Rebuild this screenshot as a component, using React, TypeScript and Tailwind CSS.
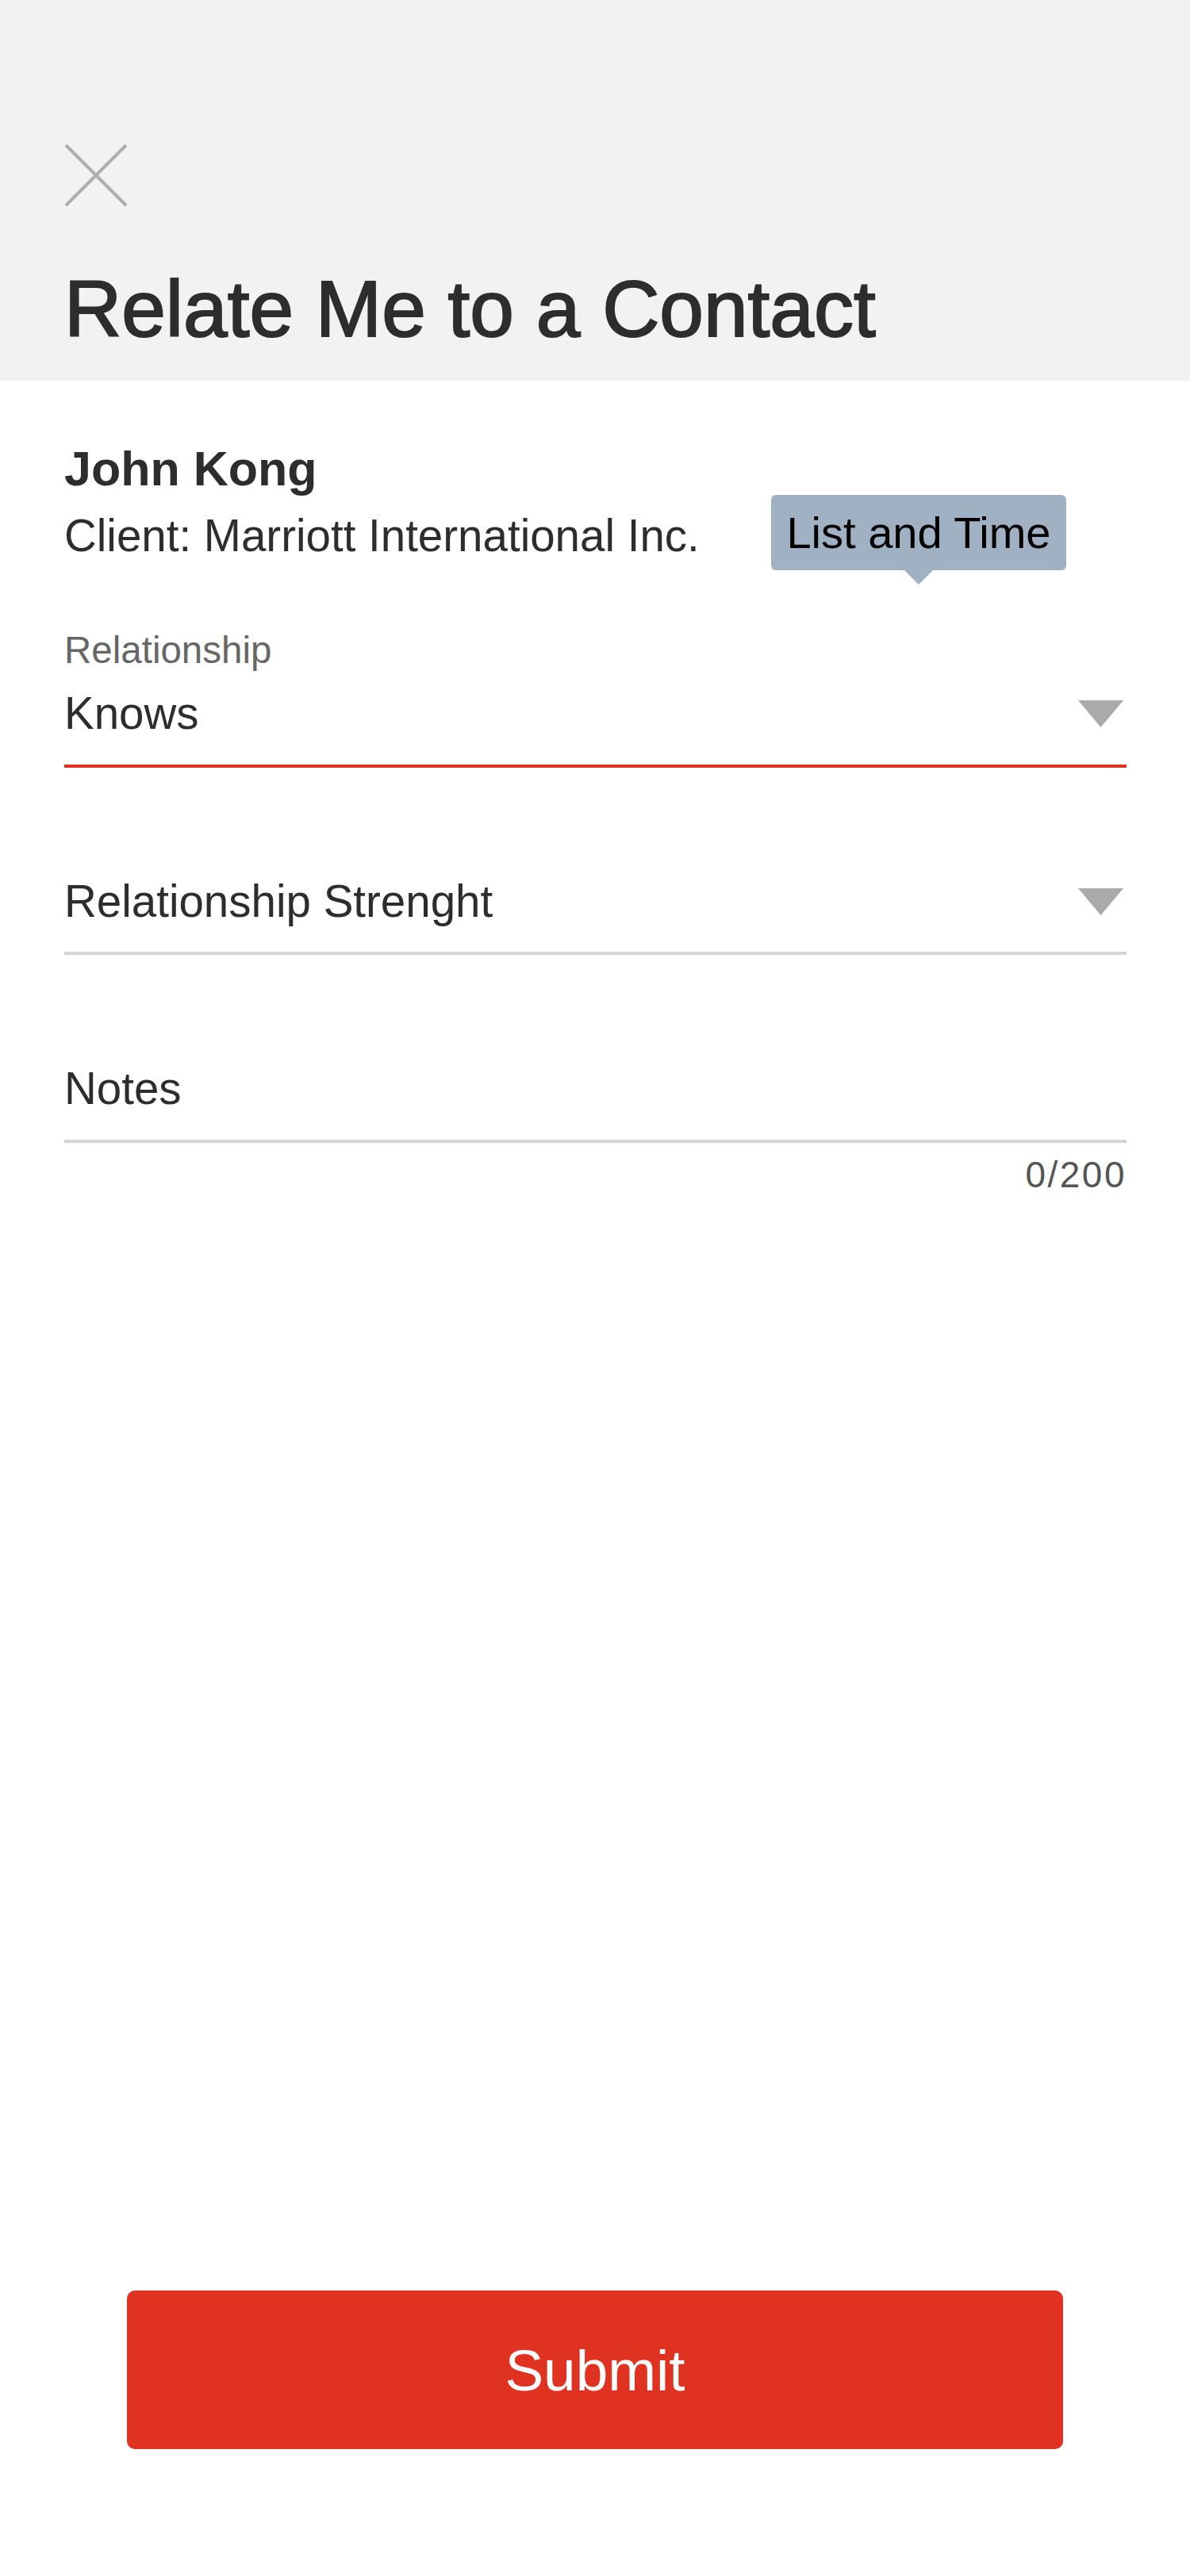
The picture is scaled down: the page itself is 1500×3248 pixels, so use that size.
import React from "react";

function CloseIcon() {
  return (
    <svg width="80" height="80" viewBox="0 0 80 80" fill="none">
      <line x1="2" y1="2" x2="78" y2="78" stroke="#adadad" strokeWidth="4" />
      <line x1="78" y1="2" x2="2" y2="78" stroke="#adadad" strokeWidth="4" />
    </svg>
  );
}

function Caret() {
  return (
    <svg width="57" height="34" viewBox="0 0 57 34" className="shrink-0 mr-[4px]">
      <polygon points="0,0 57,0 28.5,34" fill="#aaaaaa" />
    </svg>
  );
}

function SelectField({ value, active, className }: { value: string; active?: boolean; className?: string }) {
  return (
    <div
      className={
        "flex items-center justify-between pb-[35px] border-b-4 " +
        (active ? "border-[#e03120] " : "border-[#d4d4d4] ") +
        (className ?? "")
      }
    >
      <span className="text-[56.5px] leading-none">{value}</span>
      <Caret />
    </div>
  );
}

export default function App() {
  return (
    <div className="min-h-[3248px] flex flex-col bg-white text-[#2d2d2d] font-['Liberation_Sans',Arial,sans-serif]">
      <header className="h-[480px] shrink-0 bg-[#f2f2f2] pl-[81px] pt-[181px]">
        <button className="block w-[80px] h-[80px]" aria-label="Close">
          <CloseIcon />
        </button>
        <h1 className="mt-[78px] text-[100px] leading-none font-normal [-webkit-text-stroke:2px_#2d2d2d]">
          Relate Me to a Contact
        </h1>
      </header>

      <main className="relative flex-1 flex flex-col pl-[81px] pr-[80px]">
        <div className="mt-[81px] text-[61px] leading-none font-bold">John Kong</div>
        <div className="mt-[26px] text-[56.5px] leading-none">Client: Marriott International Inc.</div>

        {/* tooltip */}
        <div className="absolute left-[972px] top-[144px] w-[372px] h-[95px] rounded-[6px] bg-[#9fb1c2] flex items-center justify-center">
          <span className="text-[56px] leading-none text-black">List and Time</span>
          <div className="absolute top-full left-1/2 -translate-x-1/2 w-0 h-0 border-l-[18px] border-r-[18px] border-t-[18px] border-l-transparent border-r-transparent border-t-[#9fb1c2]" />
        </div>

        <div className="mt-[91px] text-[47.5px] leading-none text-[#666666]">Relationship</div>
        <SelectField value="Knows" active className="mt-[29px]" />

        <SelectField value="Relationship Strenght" className="mt-[141px]" />

        <div className="mt-[141px] pb-[35px] border-b-4 border-[#d4d4d4]">
          <span className="text-[56.5px] leading-none block">Notes</span>
        </div>
        <div className="mt-[17px] text-right text-[46px] leading-none tracking-[2.5px] text-[#555555]">0/200</div>

        <div className="flex-1" />

        <button className="self-center mb-[160px] -ml-px w-[1180px] h-[200px] rounded-[10px] bg-[#e03220] text-white text-[73px] leading-none">
          Submit
        </button>
      </main>
    </div>
  );
}
